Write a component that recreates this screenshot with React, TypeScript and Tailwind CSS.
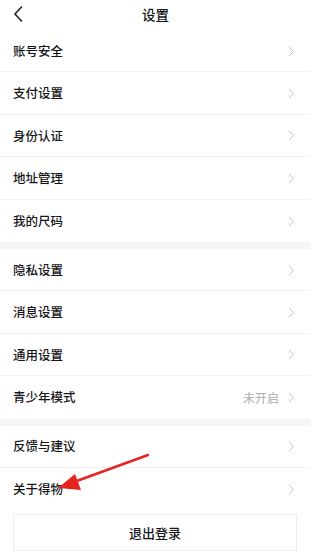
import React from "react";

type Item = { label: string; value?: string };

const groups: Item[][] = [
  [
    { label: "账号安全" },
    { label: "支付设置" },
    { label: "身份认证" },
    { label: "地址管理" },
    { label: "我的尺码" },
  ],
  [
    { label: "隐私设置" },
    { label: "消息设置" },
    { label: "通用设置" },
    { label: "青少年模式", value: "未开启" },
  ],
  [{ label: "反馈与建议" }, { label: "关于得物" }],
];

function Chevron() {
  return (
    <svg width="7" height="11" viewBox="0 0 7 11" fill="none">
      <path d="M1 1l4.5 4.5L1 10" stroke="#c4c4c8" strokeWidth="1" />
    </svg>
  );
}

function Row({ item, last }: { item: Item; last: boolean }) {
  return (
    <div
      className={
        "flex h-[42.4px] items-center justify-between pl-[13px] pr-[16px] pt-[1px] " +
        (last ? "" : "border-b border-[#f3f3f5]")
      }
    >
      <span className="text-[12.5px] font-medium text-[#16161a]">{item.label}</span>
      <div className="flex items-center gap-[9px]">
        {item.value && <span className="text-[12px] text-[#aaaab0]">{item.value}</span>}
        <Chevron />
      </div>
    </div>
  );
}

export default function App() {
  return (
    <div
      className="relative h-[552px] w-[320px] overflow-hidden bg-white"
      style={{ fontFamily: '"Noto Sans CJK SC", "Noto Sans", sans-serif' }}
    >
      <div className="w-[311px]">
        <div className="relative flex h-[30px] items-center justify-center">
          <svg className="absolute left-[13px] top-[5px]" width="12" height="18" viewBox="0 0 12 18" fill="none">
            <path d="M9 1.5L2 9l7 7.5" stroke="#222" strokeWidth="1.6" />
          </svg>
          <span className="-mt-[2px] text-[13.5px] font-medium text-[#16161a]">设置</span>
        </div>
        {groups.map((g, gi) => (
          <div key={gi}>
            {gi > 0 && <div className="h-[7px] bg-[#f5f5f8]" />}
            {g.map((it, i) => (
              <Row key={it.label} item={it} last={i === g.length - 1} />
            ))}
          </div>
        ))}
        <div className="px-[13px] pt-[4px]">
          <div className="flex h-[37px] w-[284px] items-center justify-center border border-[#ededf0]">
            <span className="text-[13px] font-medium text-[#16161a]">退出登录</span>
          </div>
        </div>
      </div>
      <svg className="absolute left-0 top-0" width="320" height="552" viewBox="0 0 320 552" fill="none">
        <line x1="148" y1="455" x2="74" y2="482" stroke="#e8231f" strokeWidth="2.4" strokeLinecap="round" />
        <polygon points="58,488 75,474 81,490" fill="#e8231f" />
      </svg>
    </div>
  );
}
